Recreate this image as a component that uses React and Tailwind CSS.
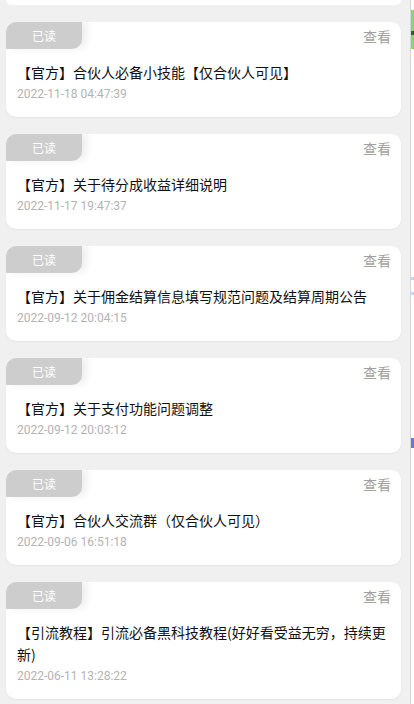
// App.jsx
// Notice list — read badge, title, timestamp, "查看" link

const notices = [
  { title: '【官方】合伙人必备小技能【仅合伙人可见】', time: '2022-11-18 04:47:39' },
  { title: '【官方】关于待分成收益详细说明', time: '2022-11-17 19:47:37' },
  { title: '【官方】关于佣金结算信息填写规范问题及结算周期公告', time: '2022-09-12 20:04:15' },
  { title: '【官方】关于支付功能问题调整', time: '2022-09-12 20:03:12' },
  { title: '【官方】合伙人交流群（仅合伙人可见）', time: '2022-09-06 16:51:18' },
  { title: '【引流教程】引流必备黑科技教程(好好看受益无穷，持续更新)', time: '2022-06-11 13:28:22' }
];

const NoticeCard = ({ title, time }) => (
  <div className="bg-white rounded-[10px] overflow-hidden shadow-[0_1px_2px_rgba(0,0,0,0.05)]">
    {/* Header: read badge + view link */}
    <div className="flex items-start justify-between h-[27px]">
      <div className="w-[76px] h-[27px] flex items-center justify-center bg-[#cdcdcd] rounded-br-[10px] text-[12px] text-white shadow-[5px_0_7px_rgba(0,0,0,0.07)]">
        已读
      </div>
      <span className="pr-[10px] pt-[4px] text-[14px] leading-[20px] text-[#a0a0a0]">查看</span>
    </div>

    {/* Body */}
    <div className="pl-[11px] pr-[10px] pt-[12px] pb-[12px]">
      <p className="text-[14px] leading-[22px] text-[#111111]">{title}</p>
      <p className="text-[12px] leading-[22px] text-[#b3b3b3]"
         style={{ fontFamily: 'Roboto, "Noto Sans", sans-serif' }}>
        {time}
      </p>
    </div>
  </div>
);

const App = () => {
  return (
    <div className="w-[414px] h-[704px] overflow-hidden flex bg-[#f0f0f0]"
         style={{ fontFamily: '"Noto Sans CJK SC", "Noto Sans", sans-serif' }}>
      {/* Main list */}
      <div className="flex-1 pl-[6px] pr-[9px]">
        {/* tail of the card scrolled off the top */}
        <div className="h-[5px] bg-white rounded-b-[10px]" />

        <div className="flex flex-col gap-[17px] mt-[17px]">
          {notices.map((n, i) => (
            <NoticeCard key={i} title={n.title} time={n.time} />
          ))}
        </div>
      </div>

      {/* Sliver of the neighbouring screen on the right edge */}
      <div className="w-[3px] border-l border-[#d6d6d6] bg-white flex flex-col box-content">
        <div className="h-[10px]" />
        <div className="h-[39px] bg-[#8fd16f] flex flex-col">
          <div className="h-[21px]" />
          <div className="h-[4px] bg-[#3a5a2a]" />
        </div>
        <div className="h-[228px]" />
        <div className="h-[3px] bg-[#c8d4f0]" />
        <div className="h-[12px]" />
        <div className="h-[3px] bg-[#c8d4f0]" />
        <div className="h-[143px]" />
        <div className="h-[10px] bg-[#6a7ad0]" />
      </div>
    </div>
  );
};

export default App;
